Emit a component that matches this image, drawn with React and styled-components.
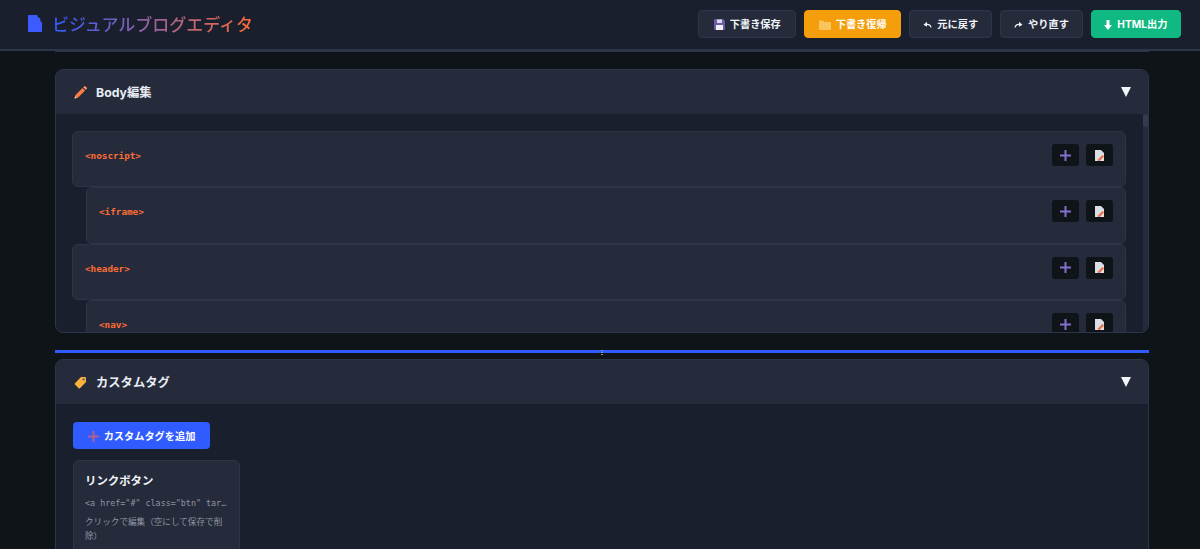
import React from "react";
import styled, { createGlobalStyle } from "styled-components";

const Global = createGlobalStyle`
  html, body { margin: 0; height: 100%; background: #0f1419; overflow: hidden; }
  * { box-sizing: border-box; }
  body { font-family: Inter, "Noto Sans CJK JP", sans-serif; color: #f1f5f9; }
`;

const Page = styled.div`
  height: 549px;
  display: flex;
  flex-direction: column;
  overflow: hidden;
  background: #0f1419;
`;
const Header = styled.header`
  height: 51px;
  flex: none;
  background: #1a1f2e;
  border-bottom: 2px solid #2d3548;
  display: flex;
  align-items: center;
  justify-content: space-between;
  padding: 0 19px 2px 28px;
`;
const Brand = styled.div`
  display: flex;
  align-items: center;
  gap: 10px;
`;
const Title = styled.h1`
  margin: 0;
  padding-top: 2px;
  font-size: 17px;
  line-height: 24px;
  font-weight: 500;
  background: linear-gradient(90deg, #2f5bff, #ff6b35);
  -webkit-background-clip: text;
  background-clip: text;
  color: transparent;
`;
const Toolbar = styled.div`
  display: flex;
  align-items: center;
  gap: 8px;
`;
const variants = {
  plain: "background:#252b3b;border-color:#2d3548;color:#f1f5f9;",
  warn: "background:#f59e0b;border-color:#f59e0b;color:#fff;",
  ok: "background:#10b981;border-color:#10b981;color:#fff;",
};
const ToolButton = styled.button`
  height: 28px;
  width: ${(p) => p.$w}px;
  padding: 2px 0 0;
  border: 1px solid;
  border-radius: 4px;
  font: 700 10.2px/1 Inter, "Noto Sans CJK JP", sans-serif;
  display: flex;
  align-items: center;
  justify-content: center;
  gap: 5px;
  ${(p) => variants[p.$kind || "plain"]}
`;
const Main = styled.main`
  flex: 1;
  min-height: 0;
  padding: 0 51px 0 55px;
  display: flex;
  flex-direction: column;
`;
const PriorEdge = styled.div`
  flex: none;
  height: 1px;
  margin-bottom: 17px;
  background: #2d3548;
`;
const Panel = styled.section`
  position: relative;
  flex: ${(p) => (p.$grow ? "1 0 auto" : "none")};
  height: ${(p) => (p.$h ? p.$h + "px" : "auto")};
  background: #1a1f2e;
  border: 1px solid #2d3548;
  border-radius: 8px 8px ${(p) => (p.$grow ? "0 0" : "8px 8px")};
  overflow: hidden;
`;
const PanelHead = styled.div`
  height: 44px;
  background: #252b3b;
  display: flex;
  align-items: center;
  justify-content: space-between;
  padding: 0 17px 0 18px;
  font-size: 12.3px;
  font-weight: 700;
  color: #e8edf5;
`;
const PanelTitle = styled.div`
  display: flex;
  align-items: center;
  gap: 9px;
`;
const Caret = styled.div`
  width: 0;
  height: 0;
  border-left: 5.5px solid transparent;
  border-right: 5.5px solid transparent;
  border-top: 10px solid #f1f5f9;
`;
const TagList = styled.div`
  padding: 17px 22px 0 16px;
  display: flex;
  flex-direction: column;
`;
const TagRow = styled.div`
  height: 56.35px;
  flex: none;
  margin-left: ${(p) => (p.$nested ? 14 : 0)}px;
  background: #252b3b;
  border: 1px solid #2d3548;
  border-radius: 6px;
  padding: 12px;
  display: flex;
  align-items: flex-start;
  justify-content: space-between;
`;
const TagName = styled.span`
  font: 700 9.3px/24px "DejaVu Sans Mono", "Liberation Mono", monospace;
  color: #ff6b35;
`;
const RowActions = styled.div`
  display: flex;
  gap: 7px;
`;
const IconButton = styled.button`
  width: 27px;
  height: 22px;
  padding: 0;
  border: none;
  border-radius: 3px;
  background: #0f1419;
  display: flex;
  align-items: center;
  justify-content: center;
`;
const ScrollTrack = styled.div`
  position: absolute;
  top: 44px;
  right: 0;
  bottom: 0;
  width: 5px;
  background: #252b3b;
`;
const ScrollThumb = styled.div`
  height: 13px;
  border-radius: 3px;
  background: #343c52;
`;
const Divider = styled.div`
  position: relative;
  flex: none;
  height: 3px;
  margin: 17px 0 6px;
  background: #2f5bff;
`;
const Grip = styled.div`
  position: absolute;
  left: 546px;
  top: 0;
  width: 2px;
  height: 5px;
  background: repeating-linear-gradient(#8a93a8 0 1px, transparent 1px 2px);
`;
const PanelBody = styled.div`
  padding: 18px 17px;
`;
const AddButton = styled.button`
  height: 27px;
  width: 137px;
  padding: 2px 0 0;
  border: none;
  border-radius: 4px;
  background: #2f5bff;
  color: #fff;
  font: 700 10.2px/1 Inter, "Noto Sans CJK JP", sans-serif;
  display: flex;
  align-items: center;
  justify-content: center;
  gap: 5px;
`;
const TagCard = styled.div`
  margin-top: 11px;
  width: 167px;
  height: 120px;
  background: #252b3b;
  border: 1px solid #2d3548;
  border-radius: 6px;
  padding: 12px 11px;
`;
const CardTitle = styled.div`
  font-size: 11.4px;
  line-height: 17px;
  font-weight: 700;
  color: #f1f5f9;
`;
const CardCode = styled.div`
  margin-top: 6px;
  font: 400 8.4px/14px "DejaVu Sans Mono", "Liberation Mono", monospace;
  color: #8f94a0;
  white-space: nowrap;
  overflow: hidden;
  text-overflow: ellipsis;
`;
const CardNote = styled.div`
  margin-top: 5px;
  font-size: 8.6px;
  line-height: 14px;
  color: #8f94a0;
`;

const DocIcon = () => (
  <svg width="14" height="17" viewBox="0 0 14 17">
    <path d="M0 1A1 1 0 0 1 1 0H9c.6 1.800 1.800 3 3.300 3.300L12.300 6 14 7.500V16a1 1 0 0 1-1 1H1a1 1 0 0 1-1-1z" fill="#3d5afe" />
  </svg>
);
const SaveIcon = () => (
  <svg width="11" height="11" viewBox="0 0 11 11">
    <path d="M0 1a1 1 0 0 1 1-1h8l2 2v8a1 1 0 0 1-1 1H1a1 1 0 0 1-1-1z" fill="#6a5aa8" />
    <rect x="3" y="0.5" width="5" height="3.5" fill="#d8dbe6" />
    <rect x="2" y="6" width="7" height="5" fill="#eef0f6" />
  </svg>
);
const FolderIcon = () => (
  <svg width="12" height="10" viewBox="0 0 12 10">
    <path d="M0 1.500A1 1 0 0 1 1 .5h3l1 1.500h6a1 1 0 0 1 1 1V9a1 1 0 0 1-1 1H1a1 1 0 0 1-1-1z" fill="#fbc55e" />
  </svg>
);
const UndoIcon = () => (
  <svg width="9" height="7" viewBox="0 0 9 7">
    <path d="M8 6.500C7.500 3.800 5.500 3 3 3.600" fill="none" stroke="#f1f5f9" strokeWidth="1.300" />
    <path d="M0.500 3.800L4 0.800v5z" fill="#f1f5f9" />
  </svg>
);
const RedoIcon = () => (
  <svg width="9" height="7" viewBox="0 0 9 7">
    <path d="M1 6.500C1.500 3.800 3.500 3 6 3.600" fill="none" stroke="#f1f5f9" strokeWidth="1.300" />
    <path d="M8.500 3.800L5 0.800v5z" fill="#f1f5f9" />
  </svg>
);
const DownIcon = () => (
  <svg width="8" height="10" viewBox="0 0 8 10">
    <path d="M2.500 0h3v5H8L4 10 0 5h2.500z" fill="#fff" />
  </svg>
);
const PencilIcon = () => (
  <svg width="13" height="13" viewBox="0 0 13 13">
    <path d="M0.500 12.500l1-3.600 7-7 2.600 2.600-7 7z" fill="#ff7a45" />
    <path d="M9.200 1.200l.8-.8a1 1 0 0 1 1.400 0l1.200 1.200a1 1 0 0 1 0 1.400l-.8.8z" fill="#ff9c70" />
    <path d="M0.500 12.500l.6-2.200 1.600 1.600z" fill="#ffd9b8" />
  </svg>
);
const TagIcon = () => (
  <svg width="13" height="13" viewBox="0 0 13 13">
    <path d="M7 1h4a1 1 0 0 1 1 1v4l-6 6.200a1 1 0 0 1-1.400 0L1 8.600a1 1 0 0 1 0-1.400z" fill="#fbb13c" />
    <circle cx="9.600" cy="3.400" r="1.100" fill="#5a5f6e" />
  </svg>
);
const PlusIcon = ({ color = "#8270d0", size = 11 }) => (
  <svg width={size} height={size} viewBox="0 0 11 11">
    <path d="M4.500 0h2v4.500H11v2H6.500V11h-2V6.500H0v-2h4.500z" fill={color} />
  </svg>
);
const EditDocIcon = () => (
  <svg width="10" height="11" viewBox="0 0 10 11">
    <path d="M0 0h6l3 3v8H0z" fill="#dcdfe8" />
    <path d="M3 9.500l4.500-4.500 1.500 1.500L4.500 11H3z" fill="#f0703c" />
  </svg>
);

const tags = [
  ["<noscript>", false],
  ["<iframe>", true],
  ["<header>", false],
  ["<nav>", true],
];

export default function App() {
  return (
    <Page>
      <Global />
      <Header>
        <Brand>
          <DocIcon />
          <Title>ビジュアルブログエディタ</Title>
        </Brand>
        <Toolbar>
          <ToolButton $w={97.9}><SaveIcon />下書き保存</ToolButton>
          <ToolButton $w={97} $kind="warn"><FolderIcon />下書き復帰</ToolButton>
          <ToolButton $w={83}><UndoIcon />元に戻す</ToolButton>
          <ToolButton $w={82.5}><RedoIcon />やり直す</ToolButton>
          <ToolButton $w={90.3} $kind="ok"><DownIcon />HTML出力</ToolButton>
        </Toolbar>
      </Header>
      <Main>
        <PriorEdge />
        <Panel $h={264}>
          <PanelHead>
            <PanelTitle><PencilIcon />Body編集</PanelTitle>
            <Caret />
          </PanelHead>
          <TagList>
            {tags.map(([name, nested]) => (
              <TagRow key={name} $nested={nested}>
                <TagName>{name}</TagName>
                <RowActions>
                  <IconButton><PlusIcon /></IconButton>
                  <IconButton><EditDocIcon /></IconButton>
                </RowActions>
              </TagRow>
            ))}
          </TagList>
          <ScrollTrack><ScrollThumb /></ScrollTrack>
        </Panel>
        <Divider><Grip /></Divider>
        <Panel $grow>
          <PanelHead>
            <PanelTitle><TagIcon />カスタムタグ</PanelTitle>
            <Caret />
          </PanelHead>
          <PanelBody>
            <AddButton><PlusIcon color="#b0628f" />カスタムタグを追加</AddButton>
            <TagCard>
              <CardTitle>リンクボタン</CardTitle>
              <CardCode>{'<a href="#" class="btn" target="_blank">'}</CardCode>
              <CardNote>クリックで編集（空にして保存で削除）</CardNote>
            </TagCard>
          </PanelBody>
        </Panel>
      </Main>
    </Page>
  );
}
